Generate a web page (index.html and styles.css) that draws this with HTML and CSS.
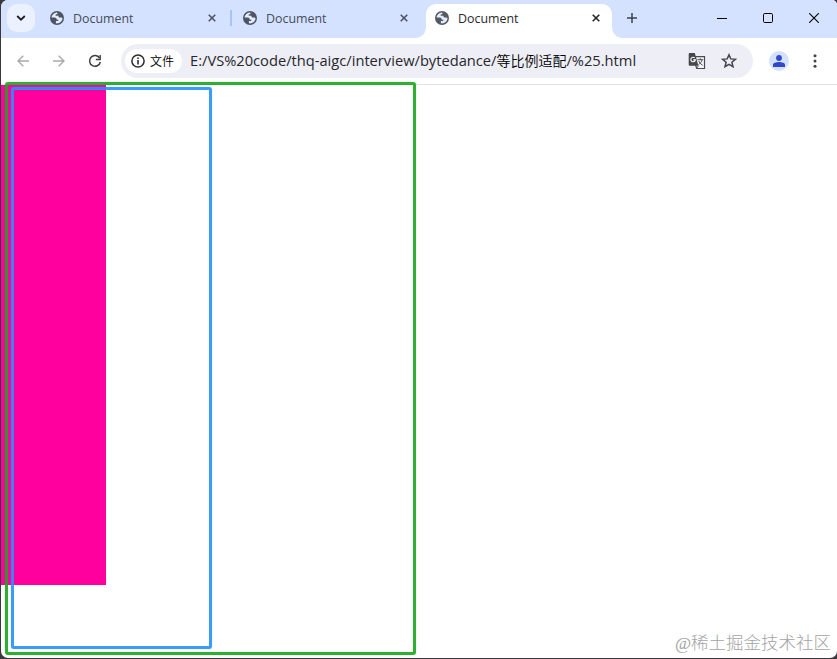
FILE: index.html
```
<!DOCTYPE html>
<html lang="zh-CN">
<head>
    <meta charset="UTF-8">
    <meta name="viewport" content="width=device-width, initial-scale=1.0">
    <title>Document</title>
    <link rel="stylesheet" href="styles.css">
</head>
<body>
    <svg class="defs" width="0" height="0">
        <symbol id="globe" viewBox="0 0 14 14">
            <circle cx="7" cy="7" r="7" fill="currentColor"/>
            <path class="land" d="M7.2 1.6C4.4 1.6 1.9 3.8 1.6 6.5h2.8c1.5 0 2.4.9 2.4 2.2h1.5v1.4H5.9v2.2c3.3.6 6.4-1.7 6.6-5.1-.6-.9-1.6-.7-2.6-.7-1.3 0-1.5-1-1.5-1.8H5.7V3.2h1.8z"/>
        </symbol>
        <symbol id="close" viewBox="0 0 8 8">
            <path d="M.7.7l6.6 6.6M7.3.7L.7 7.3" fill="none" stroke="currentColor" stroke-width="1.6"/>
        </symbol>
    </svg>

    <div class="window">
        <!-- Tabs -->
        <div class="tab-strip">
            <button class="tab-search">
                <svg width="10" height="6" viewBox="0 0 10 6"><path d="M1.2 1l3.8 3.7L8.8 1" fill="none" stroke="#1f2024" stroke-width="1.8"/></svg>
            </button>
            <div class="tab">
                <svg class="favicon"><use href="#globe"/></svg>
                <span class="title">Document</span>
                <svg class="close"><use href="#close"/></svg>
            </div>
            <div class="tab second">
                <svg class="favicon"><use href="#globe"/></svg>
                <span class="title">Document</span>
                <svg class="close"><use href="#close"/></svg>
            </div>
            <div class="tab active">
                <svg class="favicon"><use href="#globe"/></svg>
                <span class="title">Document</span>
                <svg class="close"><use href="#close"/></svg>
            </div>
            <svg class="new-tab" width="10" height="10" viewBox="0 0 10 10"><path d="M5 0v10M0 5h10" stroke="#3b4150" stroke-width="1.5"/></svg>
            <div class="window-buttons">
                <svg width="10" height="10" viewBox="0 0 10 10"><path d="M0 5.5h10" stroke="#000"/></svg>
                <svg width="10" height="10" viewBox="0 0 10 10"><rect x=".5" y=".5" width="9" height="9" rx="1.2" fill="none" stroke="#000"/></svg>
                <svg width="10" height="10" viewBox="0 0 10 10"><path d="M.2.2l9.6 9.6M9.8.2L.2 9.8" stroke="#000" stroke-width="1.1"/></svg>
            </div>
        </div>

        <!-- Toolbar -->
        <div class="toolbar">
            <svg class="back" width="12" height="12" viewBox="0 0 12 12"><path d="M12 6H1.2M6.3.7L1 6l5.3 5.3" fill="none" stroke="#a9abaf" stroke-width="1.5"/></svg>
            <svg class="forward" width="12" height="12" viewBox="0 0 12 12"><path d="M0 6h10.8M5.7.7L11 6l-5.3 5.3" fill="none" stroke="#a9abaf" stroke-width="1.5"/></svg>
            <svg class="reload" width="14" height="14" viewBox="0 0 14 14"><path d="M11.6 4A5.4 5.4 0 1 0 12.3 8" fill="none" stroke="#3c4043" stroke-width="1.5"/><path d="M12.9 1v5.2H7.8V4.8h3.7V1z" fill="#3c4043"/></svg>
            <div class="address-bar">
                <div class="chip">
                    <svg width="14" height="14" viewBox="0 0 14 14"><circle cx="7" cy="7" r="6.1" fill="none" stroke="#2b2c2f" stroke-width="1.5"/><path d="M7 6.1v4.3M7 3.4v1.5" stroke="#2b2c2f" stroke-width="1.6"/></svg>
                    <span>文件</span>
                </div>
                <span class="url">E:/VS%20code/thq-aigc/interview/bytedance/<span class="url-cn">等比例适配</span>/%25.html</span>
                <svg class="translate" width="18" height="18" viewBox="0 0 18 18">
                    <path d="M7.5 4.6h9v11.9H8.8L7.5 13z" fill="#f5f5fa" stroke="#4a4b50" stroke-width="1.2"/>
                    <path d="M1.8 1h5l3.6 12.8H1.8A1.1 1.1 0 0 1 .7 12.7V2.1A1.1 1.1 0 0 1 1.8 1z" fill="#46474b"/>
                    <path d="M6.7 5.8a2.3 2.3 0 1 0 .7 2.1H5.2" fill="none" stroke="#fff" stroke-width="1.1"/>
                    <path d="M9.4 7.7h5.7M12.2 6.2v1.5M14.1 7.8c-.6 2.3-2 3.8-3.6 4.7M10.7 9c.9 1.9 2.2 3.2 3.9 4.3M8.5 16.4l2-2.7" fill="none" stroke="#4a4b50"/>
                </svg>
                <svg class="star" width="16" height="16" viewBox="0 0 16 16"><path d="M8 1.8l1.8 4.1 4.6.4-3.5 3 1.1 4.4L8 11.3l-4 2.4 1.1-4.4-3.5-3 4.6-.4z" fill="none" stroke="#43454a" stroke-width="1.5"/></svg>
            </div>
            <div class="avatar">
                <svg width="12" height="12" viewBox="0 0 12 12"><circle cx="6" cy="3" r="2.9" fill="#3347c9"/><path d="M0 12V9.7C0 7.9 3.2 7 6 7s6 .9 6 2.7V12z" fill="#3347c9"/></svg>
            </div>
            <svg class="menu" width="4" height="14" viewBox="0 0 4 14"><g fill="#414347"><circle cx="2" cy="1.8" r="1.5"/><circle cx="2" cy="7" r="1.5"/><circle cx="2" cy="12.2" r="1.5"/></g></svg>
        </div>

        <!-- Page -->
        <div class="page">
            <div class="box"></div>
            <div class="outline green"></div>
            <div class="outline blue"></div>
            <span class="watermark">@稀土掘金技术社区</span>
        </div>
    </div>
</body>
</html>
```
FILE: styles.css
```
* {
    box-sizing: border-box;
}

body {
    margin: 0;
    height: 659px;
    padding: 0 0 1px 1px;
    overflow: hidden;
    background-color: #3c373d;
    font-family: "Open Sans", "Noto Sans CJK SC", sans-serif;
}

svg {
    display: block;
    flex: none;
}

.defs {
    position: absolute;
}

.land {
    fill: #e4ecff;
}

.window {
    width: 836px;
    height: 658px;
    border-radius: 7px 5px 7px 7px;
    overflow: hidden;
    background-color: #fff;
}

.tab-strip {
    display: flex;
    height: 38px;
    padding: 4px 0 0 6px;
    background-color: #d5e2ff;
}

.tab-search {
    display: flex;
    align-items: center;
    justify-content: center;
    width: 28px;
    height: 28px;
    padding: 0;
    border: none;
    border-radius: 10px;
    background-color: #ebf1ff;
}

.tab {
    display: flex;
    align-items: center;
    width: 193px;
    height: 28px;
    padding-left: 15px;
    color: #4d5564;
}

.favicon {
    width: 14px;
    height: 14px;
}

.title {
    width: 135px;
    margin-left: 9px;
    padding-top: 2px;
    font-size: 12.4px;
    line-height: 26px;
    color: #454c5b;
}

.close {
    width: 8px;
    height: 8px;
}

.tab.second {
    position: relative;
    width: 192px;
}

.tab.second .title,
.tab.active .title {
    width: 134px;
}

.tab.second::before {
    content: "";
    position: absolute;
    left: 2px;
    top: 6px;
    width: 2px;
    height: 16px;
    background-color: #a9c3fa;
}

.tab.active {
    position: relative;
    width: 186px;
    height: 34px;
    margin-left: 6px;
    padding: 0 0 6px 9px;
    border-radius: 10px 10px 0 0;
    background-color: #fff;
    color: #55585e;
}

.tab.active::before,
.tab.active::after {
    content: "";
    position: absolute;
    bottom: 0;
    width: 10px;
    height: 10px;
}

.tab.active::before {
    left: -10px;
    background: radial-gradient(circle at 0 0, transparent 9.5px, #fff 10px);
}

.tab.active::after {
    right: -10px;
    background: radial-gradient(circle at 100% 0, transparent 9.5px, #fff 10px);
}

.tab.active .title,
.tab.active .close {
    color: #27282c;
}

.new-tab {
    margin: 9px 0 0 15px;
}

.window-buttons {
    display: flex;
    gap: 36px;
    margin: 9px 0 0 80px;
}

.toolbar {
    display: flex;
    align-items: center;
    height: 47px;
    padding: 0 0 1px 16px;
    border-bottom: 1px solid #e2e3e8;
}

.forward {
    margin-left: 24px;
}

.reload {
    margin-left: 23px;
}

.address-bar {
    display: flex;
    align-items: center;
    width: 632px;
    height: 34px;
    margin-left: 19px;
    padding-left: 4px;
    border-radius: 17px;
    background-color: #eeeef6;
}

.chip {
    display: flex;
    align-items: center;
    width: 57px;
    height: 24px;
    padding-left: 6px;
    border-radius: 12px;
    background-color: #fff;
    font-size: 12px;
    font-weight: 350;
    color: #000;
}

.chip span {
    margin-left: 5px;
    white-space: nowrap;
}

.url {
    width: 498px;
    margin-left: 8px;
    font-size: 14.68px;
    line-height: 24px;
    white-space: nowrap;
    color: #27282c;
}

.url-cn {
    font-size: 14px;
    font-weight: 350;
    color: #000;
}

.star {
    margin-left: 15px;
}

.avatar {
    display: flex;
    align-items: center;
    justify-content: center;
    width: 20px;
    height: 20px;
    margin-left: 16px;
    border-radius: 50%;
    background-color: #d3e1fc;
}

.menu {
    margin-left: 24px;
}

.page {
    position: relative;
    height: 573px;
}

.box {
    width: 105px;
    height: 500px;
    background-color: #ff009f;
}

/* hand-drawn frames lie over the page */
.outline {
    position: absolute;
    border: 3px solid;
    border-radius: 3px;
}

.green {
    left: 4px;
    top: -3px;
    width: 411px;
    height: 573px;
    border-color: rgba(24, 166, 28, 0.9);
    box-shadow: 0 0 1px rgba(24, 166, 28, 0.6);
}

.blue {
    left: 10px;
    top: 2px;
    width: 201px;
    height: 562px;
    border-color: rgba(36, 146, 246, 0.9);
    box-shadow: 0 0 1px rgba(36, 146, 246, 0.6);
}

.watermark {
    position: absolute;
    right: 6px;
    bottom: 3px;
    font-family: "Liberation Serif", "Noto Sans CJK SC", serif;
    font-size: 17.5px;
    font-weight: 300;
    line-height: 24px;
    white-space: nowrap;
    color: #a4a4a4;
}
```
